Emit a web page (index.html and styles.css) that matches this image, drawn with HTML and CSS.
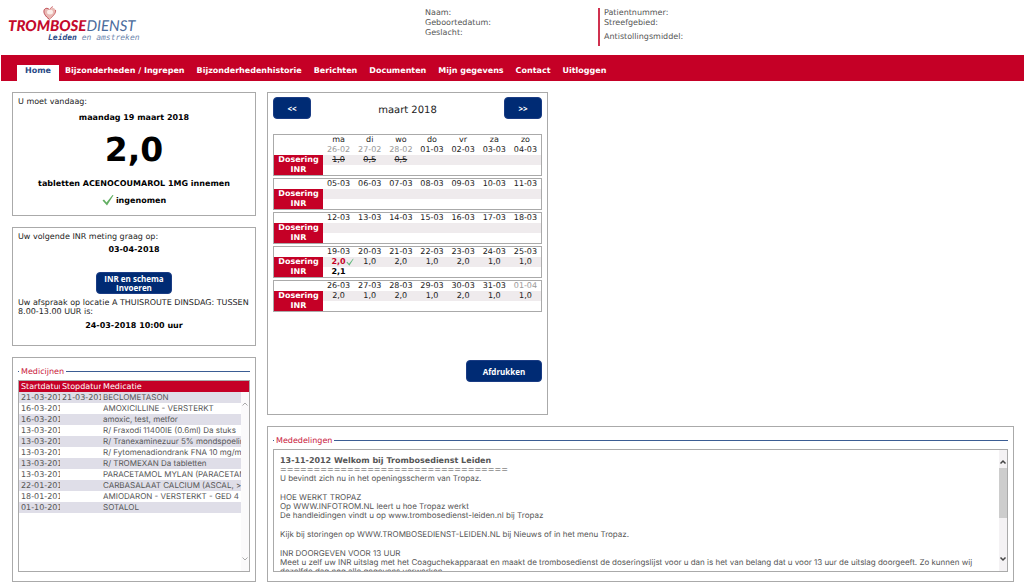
FILE: index.html
```html
<!DOCTYPE html>
<html lang="nl">
<head>
<meta charset="utf-8">
<title>Trombosedienst Leiden</title>
<link rel="stylesheet" href="styles.css">
</head>
<body>
<header class="header">
  <div class="logo">
    <svg class="logo-heart" viewBox="0 0 14 15" aria-hidden="true">
      <path d="M6.500 13.500C2 10 .5 7 1 4.500C1.600 2 4.500 1.500 6.500 3.800C8 1.500 11.500 1.500 12.500 4C13.300 7 10 10 6.500 13.500Z" fill="#e9b9b4"/>
      <path d="M6.500 13.500C2 10 .5 7 1 4.500C1.600 2 4.500 1.500 6.500 3.800" fill="none" stroke="#bd4650" stroke-width="1"/>
      <path d="M6.500 4.500C7.500 1.500 9 .8 10 .8M12.500 4C13.300 7 10 10 7.500 12.500" fill="none" stroke="#cb6266" stroke-width="1"/>
      <ellipse cx="7" cy="6" rx="3" ry="2.500" fill="#fbeeea"/>
    </svg>
    <div class="logo-name"><strong>TROMBOSE</strong><span>DIENST</span></div>
    <div class="logo-region"><strong>Leiden</strong> <span>en amstreken</span></div>
  </div>
  <div class="person">
    <div>Naam:</div>
    <div>Geboortedatum:</div>
    <div>Geslacht:</div>
  </div>
  <div class="patient">
    <div>Patientnummer:</div>
    <div>Streefgebied:</div>
    <div class="drug">Antistollingsmiddel:</div>
  </div>
</header>
<nav class="nav">
  <a class="active" href="#">Home</a>
  <a href="#">Bijzonderheden / Ingrepen</a>
  <a href="#">Bijzonderhedenhistorie</a>
  <a href="#">Berichten</a>
  <a href="#">Documenten</a>
  <a href="#">Mijn gegevens</a>
  <a href="#">Contact</a>
  <a href="#">Uitloggen</a>
</nav>
<main class="main">
  <div class="side">
    <section class="panel today">
      <p>U moet vandaag:</p>
      <p class="date">maandag 19 maart 2018</p>
      <p class="dose">2,0</p>
      <p class="drugline">tabletten ACENOCOUMAROL 1MG innemen</p>
      <p class="taken"><svg class="check" viewBox="0 0 12 12" aria-hidden="true"><path d="M.5 6.500L2 5.500L4.500 8.500L10.500 1L11.500 1.300L5 11.500Z" fill="#62ae62"/></svg>ingenomen</p>
    </section>
    <section class="panel next">
      <p>Uw volgende INR meting graag op:</p>
      <p class="strong">03-04-2018</p>
      <button class="btn enter" type="button">INR en schema<br>Invoeren</button>
      <p>Uw afspraak op locatie A THUISROUTE DINSDAG: TUSSEN 8.00-13.00 UUR is:</p>
      <p class="strong appointment">24-03-2018 10:00 uur</p>
    </section>
    <section class="panel boxed grow">
      <h2 class="legend">Medicijnen</h2>
      <div class="meds">
        <table class="meds-table meds-head">
          <thead><tr><th>Startdatum</th><th>Stopdatum</th><th>Medicatie</th></tr></thead>
        </table>
        <div class="scroll">
          <div class="scroll-body">
            <table class="meds-table">
              <tbody>
                <tr><td>21-03-201</td><td>21-03-201</td><td>BECLOMETASON</td></tr>
                <tr><td>16-03-201</td><td></td><td>AMOXICILLINE - VERSTERKT</td></tr>
                <tr><td>16-03-201</td><td></td><td>amoxic, test, metfor</td></tr>
                <tr><td>13-03-201</td><td></td><td>R/ Fraxodi 11400IE (0.6ml) Da stuks</td></tr>
                <tr><td>13-03-201</td><td></td><td>R/ Tranexaminezuur 5% mondspoelin</td></tr>
                <tr><td>13-03-201</td><td></td><td>R/ Fytomenadiondrank FNA 10 mg/m</td></tr>
                <tr><td>13-03-201</td><td></td><td>R/ TROMEXAN Da tabletten</td></tr>
                <tr><td>13-03-201</td><td></td><td>PARACETAMOL MYLAN (PARACETAMO</td></tr>
                <tr><td>22-01-201</td><td></td><td>CARBASALAAT CALCIUM (ASCAL, &gt;</td></tr>
                <tr><td>18-01-201</td><td></td><td>AMIODARON - VERSTERKT - GED 4 W</td></tr>
                <tr><td>01-10-201</td><td></td><td>SOTALOL</td></tr>
              </tbody>
            </table>
          </div>
          <div class="bar idle">
            <svg viewBox="0 0 8 6" aria-hidden="true"><path d="M1.500 4.500L4 2L6.500 4.500"/></svg>
            <svg viewBox="0 0 8 6" aria-hidden="true"><path d="M1.500 1.500L4 4L6.500 1.500"/></svg>
          </div>
        </div>
      </div>
    </section>
  </div>
  <div class="content">
    <section class="panel calendar">
      <div class="month">
        <button class="btn step" type="button">&lt;&lt;</button>
        <h1>maart 2018</h1>
        <button class="btn step" type="button">&gt;&gt;</button>
      </div>
      <div class="weeks">
        <table class="week">
          <tr><td></td><td>ma</td><td>di</td><td>wo</td><td>do</td><td>vr</td><td>za</td><td>zo</td></tr>
          <tr><td></td><td class="out">26-02</td><td class="out">27-02</td><td class="out">28-02</td><td>01-03</td><td>02-03</td><td>03-03</td><td>04-03</td></tr>
          <tr class="doses"><th>Dosering</th><td><s>1,0</s></td><td><s>0,5</s></td><td><s>0,5</s></td><td></td><td></td><td></td><td></td></tr>
          <tr><th>INR</th><td></td><td></td><td></td><td></td><td></td><td></td><td></td></tr>
        </table>
        <table class="week">
          <tr><td></td><td>05-03</td><td>06-03</td><td>07-03</td><td>08-03</td><td>09-03</td><td>10-03</td><td>11-03</td></tr>
          <tr class="doses"><th>Dosering</th><td></td><td></td><td></td><td></td><td></td><td></td><td></td></tr>
          <tr><th>INR</th><td></td><td></td><td></td><td></td><td></td><td></td><td></td></tr>
        </table>
        <table class="week">
          <tr><td></td><td>12-03</td><td>13-03</td><td>14-03</td><td>15-03</td><td>16-03</td><td>17-03</td><td>18-03</td></tr>
          <tr class="doses"><th>Dosering</th><td></td><td></td><td></td><td></td><td></td><td></td><td></td></tr>
          <tr><th>INR</th><td></td><td></td><td></td><td></td><td></td><td></td><td></td></tr>
        </table>
        <table class="week">
          <tr><td></td><td>19-03</td><td>20-03</td><td>21-03</td><td>22-03</td><td>23-03</td><td>24-03</td><td>25-03</td></tr>
          <tr class="doses"><th>Dosering</th><td class="now">2,0<svg class="mark" viewBox="0 0 12 12" aria-hidden="true"><path d="M.5 6.500L2 5.500L4.500 8.500L10.500 1L11.500 1.300L5 11.500Z" fill="#5fb87c"/></svg></td><td>1,0</td><td>2,0</td><td>1,0</td><td>2,0</td><td>1,0</td><td>1,0</td></tr>
          <tr><th>INR</th><td><b>2,1</b></td><td></td><td></td><td></td><td></td><td></td><td></td></tr>
        </table>
        <table class="week">
          <tr><td></td><td>26-03</td><td>27-03</td><td>28-03</td><td>29-03</td><td>30-03</td><td>31-03</td><td class="out">01-04</td></tr>
          <tr class="doses"><th>Dosering</th><td>2,0</td><td>1,0</td><td>2,0</td><td>1,0</td><td>2,0</td><td>1,0</td><td>1,0</td></tr>
          <tr><th>INR</th><td></td><td></td><td></td><td></td><td></td><td></td><td></td></tr>
        </table>
      </div>
      <button class="btn print" type="button">Afdrukken</button>
    </section>
    <section class="panel boxed grow">
      <h2 class="legend">Mededelingen</h2>
      <div class="news scroll">
        <div class="scroll-body">
          <p><strong>13-11-2012 Welkom bij Trombosedienst Leiden</strong><br><span class="rule">==================================</span><br>U bevindt zich nu in het openingsscherm van Tropaz.</p>
          <p>HOE WERKT TROPAZ<br>Op WWW.INFOTROM.NL leert u hoe Tropaz werkt<br>De handleidingen vindt u op www.trombosedienst-leiden.nl bij Tropaz</p>
          <p>Kijk bij storingen op WWW.TROMBOSEDIENST-LEIDEN.NL bij Nieuws of in het menu Tropaz.</p>
          <p>INR DOORGEVEN VOOR 13 UUR<br>Meet u zelf uw INR uitslag met het Coaguchekapparaat en maakt de trombosedienst de doseringslijst voor u dan is het van belang dat u voor 13 uur de uitslag doorgeeft. Zo kunnen wij<br>dezelfde dag nog alle gegevens verwerken.</p>
        </div>
        <div class="bar">
          <svg viewBox="0 0 8 6" aria-hidden="true"><path d="M1.500 4.500L4 2L6.500 4.500"/></svg>
          <div class="thumb"></div>
          <svg viewBox="0 0 8 6" aria-hidden="true"><path d="M1.500 1.500L4 4L6.500 1.500"/></svg>
        </div>
      </div>
    </section>
  </div>
</main>
</body>
</html>
```
FILE: styles.css
```css
* { box-sizing: border-box; }
body {
  margin: 0;
  min-height: 100vh;
  display: flex;
  flex-direction: column;
  font: 8px/9px Verdana, "DejaVu Sans", sans-serif;
  text-rendering: geometricPrecision;
  color: #222;
  background: #fff;
}
p, h1, h2 { margin: 0; font-weight: normal; }

.header { display: flex; height: 55px; padding-left: 8px; color: #555; }
.logo { width: 417px; padding-top: 6px; }
.logo-heart { display: block; width: 14px; height: 15px; margin-left: 35px; }
.logo-name { margin-top: -3px; font: italic 15px/17px Lato, sans-serif; color: #4a6b9c; }
.logo-name strong { font-weight: 900; color: #c40a2b; }
.logo-region { margin-left: 40px; font: italic 8px/6px "DejaVu Sans Mono", monospace; color: #6d86ae; white-space: nowrap; }
.logo-region strong { color: #2a4a86; }
.person { width: 173px; padding-top: 8px; line-height: 10px; }
.patient { height: 38px; margin-top: 8px; padding-left: 4px; line-height: 10px; border-left: 2px solid #d0314f; }
.drug { margin-top: 4px; }

.nav { display: flex; height: 26px; margin-left: 1px; padding: 10px 0 0 16px; background: #c50026; }
.nav a { padding: 0 6px; font-weight: bold; line-height: 11px; color: #fff; text-decoration: none; }
.nav .active { padding: 0 8px; color: #2a4a86; background: #fff; }

.main { flex: 1; display: flex; gap: 11px; padding: 11px 10px 6px 12px; }
.side { flex: none; width: 244px; display: flex; flex-direction: column; gap: 11px; }
.content { flex: 1; min-width: 0; display: flex; flex-direction: column; gap: 11px; }
.panel { padding: 4px 5px; border: 1px solid #aaa; }
.grow { flex: 1; }

.today { height: 124px; }
.date, .dose, .drugline, .taken, .strong { font-weight: bold; text-align: center; color: #000; }
.date { margin-top: 7px; }
.dose { margin-top: 8px; font-size: 33px; line-height: 40px; }
.drugline { margin-top: 9px; }
.taken { display: flex; justify-content: center; align-items: center; gap: 2px; margin-top: 6px; }
.check { width: 12px; height: 12px; }

.next { display: flex; flex-direction: column; height: 119px; }
.next .strong { margin-top: 4px; }
.next .appointment { margin-top: 5px; }

.btn {
  padding: 0;
  border: 1px solid #1a3c84;
  border-radius: 4px;
  background: #002b74;
  color: #fff;
  font: bold 8px/9px "Open Sans", sans-serif;
}
.enter { align-self: center; width: 76px; height: 22px; margin: 18px 0 4px; }
.step { width: 38px; height: 22px; }
.print { align-self: flex-end; width: 76px; height: 22px; margin-top: 48px; }

.boxed { display: flex; flex-direction: column; min-height: 0; padding: 9px 5px; }
.legend { display: flex; align-items: center; gap: 2px; font-size: 8px; line-height: 9px; color: #c8163a; }
.legend::before { content: ""; width: 1px; height: 1px; background: #3b5d94; }
.legend::after { content: ""; flex: 1; height: 1px; background: #3b5d94; }

.meds { flex: 1; display: flex; flex-direction: column; margin-top: 4px; border: 1px solid #aaa; }
.meds-table { width: 100%; table-layout: fixed; border-collapse: collapse; color: #555; }
.meds-table th, .meds-table td {
  height: 11px;
  padding: 0 0 0 2px;
  overflow: hidden;
  font-weight: normal;
  text-align: left;
  white-space: nowrap;
}
.meds-table th:nth-child(-n+2), .meds-table td:nth-child(-n+2) { width: 41px; }
.meds-table td:last-child { font-family: Inter, sans-serif; }
.meds-head { background: #c50026; }
.meds-head th { color: #fff; }
.meds-table tbody tr:nth-child(odd) { background: #dfdee8; }
.scroll { flex: 1; display: flex; min-height: 0; }
.scroll-body { flex: 1; min-width: 0; overflow: hidden; }
.bar { flex: none; display: flex; flex-direction: column; width: 8px; padding: 9px 0; background: #f4f2f4; }
.bar svg { width: 8px; height: 6px; fill: none; stroke: #444; stroke-width: 1.5; }
.idle { justify-content: space-between; background: #fbfafb; }
.idle svg { stroke: #aaa; stroke-width: 1; }
.thumb { height: 50px; margin: 3px 0 auto; background: #cdcdcd; }

.calendar { display: flex; flex-direction: column; width: 281px; height: 323px; }
.month { display: flex; justify-content: space-between; }
.month h1 { font-size: 10px; line-height: 28px; }
.month .step { margin-bottom: 6px; }
.weeks { display: flex; flex-direction: column; gap: 2px; margin-top: 9px; }
.week { width: 100%; table-layout: fixed; border: 1px solid #aaa; border-spacing: 0; text-align: center; }
.week th, .week td { height: 10px; padding: 0; line-height: 10px; }
.week tr > :first-child { width: 49px; }
.week th { background: #c50026; color: #fff; }
.doses td { background: #efebed; }
.out { color: #999; }
.week .now { position: relative; font-weight: bold; color: #c50026; }
.mark { position: absolute; top: 1px; right: 0; width: 8px; height: 8px; }
.week b { color: #000; }

.news { flex: 1 1 0; margin-top: 4px; border: 1px solid #aaa; color: #555; font-family: Inter, sans-serif; }
.news .scroll-body { padding: 6px 2px 0 6px; }
.news p { margin-bottom: 10px; white-space: nowrap; }
.news strong, .rule { font-family: Verdana, "DejaVu Sans", sans-serif; }
.rule { color: #888; }
```
